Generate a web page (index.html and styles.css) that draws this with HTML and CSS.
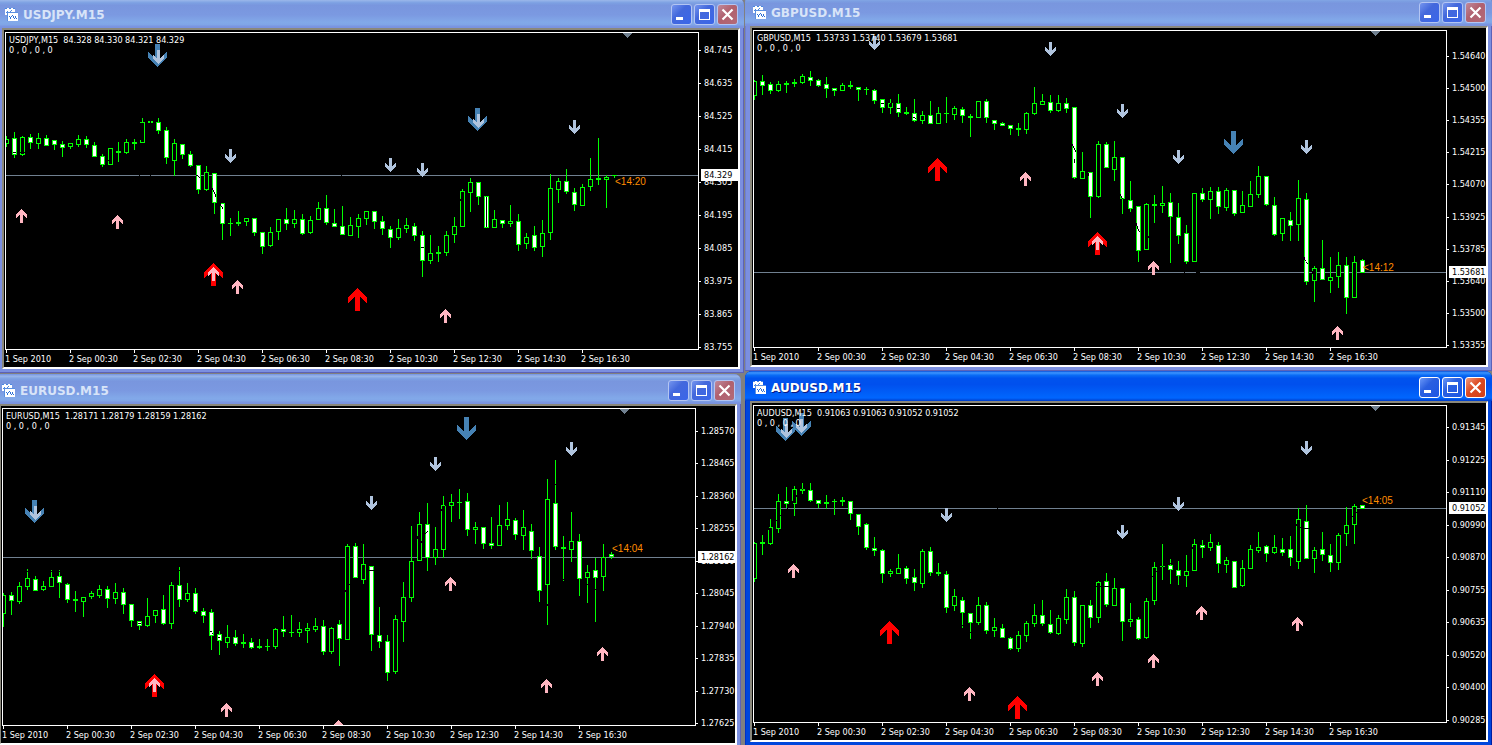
FILE: index.html
```html
<!DOCTYPE html>
<html lang="en">
<head>
    <meta charset="UTF-8">
    <meta name="viewport" content="width=device-width, initial-scale=1.0">
    <title>Charts M15</title>
    <link rel="stylesheet" href="styles.css">
</head>
<body>
    <!-- shared icons -->
    <svg class="sprite" aria-hidden="true">
        <symbol id="icon-chart" viewBox="0 0 13 13">
            <path fill="#fff" d="M0 0h10v7H0z"/>
            <path fill="#4a86e0" d="M0 0h2v1H0zM4 0h2v1H4zM8 0h2v1H8zM1 4h1v1H1zM2 3h1v1H2zM3 4h1v1H3zM5 3h1v1H5zM6 2h1v1H6z"/>
            <path fill="#5a8fe0" d="M2 4h11v9H2z"/>
            <path fill="#fff" d="M3 5h10v8H3z"/>
            <path fill="#2c6fd6" d="M4 8h1v1H4zM5 9h1v2H5zM6 8h1v1H6zM7 7h1v1H7zM8 8h1v2H8zM9 10h1v1H9zM10 8h1v2h-1zM11 10h1v1h-1z"/>
        </symbol>
        <symbol id="icon-min" viewBox="0 0 19 19">
            <path fill="#fff" d="M4 12h7v3H4z"/>
        </symbol>
        <symbol id="icon-max" viewBox="0 0 19 19">
            <path fill="#fff" fill-rule="evenodd" d="M4 4h11v11H4zM5 7v7h9V7z"/>
        </symbol>
        <symbol id="icon-close" viewBox="0 0 19 19">
            <path stroke="#fff" stroke-width="2.2" d="M4.5 4.5l10 10M14.5 4.5l-10 10"/>
        </symbol>
    </svg>

    <main class="desktop">
        <div class="column">
            <section class="window usdjpy">
                <header class="titlebar">
                    <svg class="app-icon"><use href="#icon-chart"/></svg>
                    <h2 class="title">USDJPY.M15</h2>
                    <button class="btn" aria-label="Minimize"><svg><use href="#icon-min"/></svg></button>
                    <button class="btn" aria-label="Maximize"><svg><use href="#icon-max"/></svg></button>
                    <button class="btn close" aria-label="Close"><svg><use href="#icon-close"/></svg></button>
                </header>
                <div class="client">
                    <div class="chart">
                        <div class="plot">
                            <svg class="candles" data-pair="usdjpy"></svg>
                            <p class="info">USDJPY,M15&nbsp; 84.328 84.330 84.321 84.329<br>0 , 0 , 0 , 0</p>
                        </div>
                        <div class="price-axis">
                            <ul class="prices">
                                <li>84.745</li><li>84.635</li><li>84.525</li><li>84.415</li><li>84.305</li>
                                <li>84.195</li><li>84.085</li><li>83.975</li><li>83.865</li><li>83.755</li>
                            </ul>
                            <span class="price-tag">84.329</span>
                        </div>
                    </div>
                    <ul class="time-axis">
                        <li>1 Sep 2010</li><li>2 Sep 00:30</li><li>2 Sep 02:30</li><li>2 Sep 04:30</li><li>2 Sep 06:30</li>
                        <li>2 Sep 08:30</li><li>2 Sep 10:30</li><li>2 Sep 12:30</li><li>2 Sep 14:30</li><li>2 Sep 16:30</li>
                    </ul>
                </div>
            </section>

            <section class="window eurusd">
                <header class="titlebar">
                    <svg class="app-icon"><use href="#icon-chart"/></svg>
                    <h2 class="title">EURUSD.M15</h2>
                    <button class="btn" aria-label="Minimize"><svg><use href="#icon-min"/></svg></button>
                    <button class="btn" aria-label="Maximize"><svg><use href="#icon-max"/></svg></button>
                    <button class="btn close" aria-label="Close"><svg><use href="#icon-close"/></svg></button>
                </header>
                <div class="client">
                    <div class="chart">
                        <div class="plot">
                            <svg class="candles" data-pair="eurusd"></svg>
                            <p class="info">EURUSD,M15&nbsp; 1.28171 1.28179 1.28159 1.28162<br>0 , 0 , 0 , 0</p>
                        </div>
                        <div class="price-axis">
                            <ul class="prices">
                                <li>1.28570</li><li>1.28465</li><li>1.28360</li><li>1.28255</li><li>1.28150</li>
                                <li>1.28045</li><li>1.27940</li><li>1.27835</li><li>1.27730</li><li>1.27625</li>
                            </ul>
                            <span class="price-tag">1.28162</span>
                        </div>
                    </div>
                    <ul class="time-axis">
                        <li>1 Sep 2010</li><li>2 Sep 00:30</li><li>2 Sep 02:30</li><li>2 Sep 04:30</li><li>2 Sep 06:30</li>
                        <li>2 Sep 08:30</li><li>2 Sep 10:30</li><li>2 Sep 12:30</li><li>2 Sep 14:30</li><li>2 Sep 16:30</li>
                    </ul>
                </div>
            </section>
        </div>

        <div class="column">
            <section class="window gbpusd">
                <header class="titlebar">
                    <svg class="app-icon"><use href="#icon-chart"/></svg>
                    <h2 class="title">GBPUSD.M15</h2>
                    <button class="btn" aria-label="Minimize"><svg><use href="#icon-min"/></svg></button>
                    <button class="btn" aria-label="Maximize"><svg><use href="#icon-max"/></svg></button>
                    <button class="btn close" aria-label="Close"><svg><use href="#icon-close"/></svg></button>
                </header>
                <div class="client">
                    <div class="chart">
                        <div class="plot">
                            <svg class="candles" data-pair="gbpusd"></svg>
                            <p class="info">GBPUSD,M15&nbsp; 1.53733 1.53740 1.53679 1.53681<br>0 , 0 , 0 , 0</p>
                        </div>
                        <div class="price-axis">
                            <ul class="prices">
                                <li>1.54640</li><li>1.54500</li><li>1.54355</li><li>1.54215</li><li>1.54070</li>
                                <li>1.53925</li><li>1.53785</li><li>1.53640</li><li>1.53500</li><li>1.53355</li>
                            </ul>
                            <span class="price-tag">1.53681</span>
                        </div>
                    </div>
                    <ul class="time-axis">
                        <li>1 Sep 2010</li><li>2 Sep 00:30</li><li>2 Sep 02:30</li><li>2 Sep 04:30</li><li>2 Sep 06:30</li>
                        <li>2 Sep 08:30</li><li>2 Sep 10:30</li><li>2 Sep 12:30</li><li>2 Sep 14:30</li><li>2 Sep 16:30</li>
                    </ul>
                </div>
            </section>

            <section class="window audusd active">
                <header class="titlebar">
                    <svg class="app-icon"><use href="#icon-chart"/></svg>
                    <h2 class="title">AUDUSD.M15</h2>
                    <button class="btn" aria-label="Minimize"><svg><use href="#icon-min"/></svg></button>
                    <button class="btn" aria-label="Maximize"><svg><use href="#icon-max"/></svg></button>
                    <button class="btn close" aria-label="Close"><svg><use href="#icon-close"/></svg></button>
                </header>
                <div class="client">
                    <div class="chart">
                        <div class="plot">
                            <svg class="candles" data-pair="audusd"></svg>
                            <p class="info">AUDUSD,M15&nbsp; 0.91063 0.91063 0.91052 0.91052<br>0 , 0 , 0 , 0</p>
                        </div>
                        <div class="price-axis">
                            <ul class="prices">
                                <li>0.91345</li><li>0.91225</li><li>0.91110</li><li>0.90990</li><li>0.90870</li>
                                <li>0.90755</li><li>0.90635</li><li>0.90520</li><li>0.90400</li><li>0.90285</li>
                            </ul>
                            <span class="price-tag">0.91052</span>
                        </div>
                    </div>
                    <ul class="time-axis">
                        <li>1 Sep 2010</li><li>2 Sep 00:30</li><li>2 Sep 02:30</li><li>2 Sep 04:30</li><li>2 Sep 06:30</li>
                        <li>2 Sep 08:30</li><li>2 Sep 10:30</li><li>2 Sep 12:30</li><li>2 Sep 14:30</li><li>2 Sep 16:30</li>
                    </ul>
                </div>
            </section>
        </div>
    </main>
    <script src="charts.js"></script>
</body>
</html>
```

FILE: styles.css
```css
* {
    margin: 0;
    padding: 0;
    box-sizing: border-box;
}

body {
    background: #808080;
    overflow: hidden;
    font-family: "DejaVu Sans Condensed", "DejaVu Sans", sans-serif;
}

.sprite {
    position: absolute;
    width: 0;
    height: 0;
}

.desktop {
    display: flex;
    height: 100vh;
    overflow: hidden;
}

.column {
    flex: 1;
    min-width: 0;
}

/* windows */
.window {
    padding: 0 4px 4px 5px;
    background: #7b8fe0;
    border-radius: 7px 7px 0 0;
    box-shadow: inset -1px -1px #5c62b8, inset 1px 0 #6f7fd0;
}

.usdjpy {
    margin: -2px 2px 0 -3px;
}

.eurusd {
    margin: 1px 5px 0 -6px;
}

.gbpusd {
    margin: -4px 0 0 -1px;
}

.audusd {
    margin: 0 0 0 -1px;
}

.titlebar {
    display: flex;
    align-items: center;
    gap: 2px;
    height: 30px;
    margin: 0 -4px 0 -5px;
    padding: 3px 6px 0 8px;
    border-radius: 7px 7px 0 0;
    background: linear-gradient(180deg, #7697e7, #7e9ee3 3%, #94afe8 6%, #97b4e9 8%, #82a5e4 14%, #7c9fe2 17%, #7996de 25%, #7b99e1 56%, #82a9e9 81%, #80a5e7 89%, #7b96e1 94%, #7a93df 97%, #7a93df);
}

.app-icon {
    width: 13px;
    height: 13px;
    shape-rendering: crispEdges;
}

.title {
    flex: 1;
    padding-left: 3px;
    font: bold 12px/16px "DejaVu Sans", sans-serif;
    color: #d8e4f8;
}

.btn {
    width: 21px;
    height: 21px;
    border: 1px solid #b3c5f3;
    border-radius: 3px;
    background: linear-gradient(135deg, #7595ee, #4368dc 40%, #3a66ea);
}

.btn svg {
    display: block;
    width: 19px;
    height: 19px;
}

.btn.close {
    background: linear-gradient(135deg, #c08a9c, #b0606e 45%, #b36a78);
}

.active {
    background: #0046dc;
    box-shadow: inset -1px -1px #001ea0, inset 1px 0 #0030c8;
}

.active .titlebar {
    background: linear-gradient(180deg, #0a50d8, #3d95ff 6%, #0a6cf5 14%, #0053ee 24%, #0050ee 45%, #0062fa 80%, #0066ff 90%, #0048d8 97%, #003dc8);
}

.active .title {
    color: #fff;
    text-shadow: 1px 1px #0a1883;
}

.active .btn {
    border-color: #fff;
    background: linear-gradient(135deg, #6b98f8, #2a5fe0 40%, #1c56e4);
}

.active .btn.close {
    background: linear-gradient(135deg, #f09a80, #dc4a22 45%, #d0401a);
}

/* chart area */
.client {
    padding: 2px 0 0 1px;
    background: #000;
    border: 2px solid;
    border-color: #8a887c #fff #fff #8a887c;
    color: #fff;
    font-size: 9px;
    line-height: 10px;
    white-space: nowrap;
    overflow: hidden;
}

.chart {
    display: flex;
    height: 318px;
}

.plot {
    position: relative;
    flex: 1;
    min-width: 0;
    border: 1px solid #fff;
}

.candles {
    display: block;
    width: 100%;
    height: 100%;
    shape-rendering: crispEdges;
}

.candles text {
    font: 10px "Liberation Sans", Arial, sans-serif;
    fill: #ff8c00;
}

.info {
    position: absolute;
    top: 2px;
    left: 3px;
}

.price-axis {
    position: relative;
    width: 39px;
}

.prices {
    display: flex;
    flex-direction: column;
    justify-content: space-between;
    height: 320px;
    list-style: none;
}

.prices li {
    position: relative;
    padding-left: 5px;
}

.prices li::before {
    content: "";
    position: absolute;
    left: 0;
    top: 5px;
    width: 2px;
    height: 1px;
    background: #fff;
}

.usdjpy .prices {
    padding-top: 13px;
}

.gbpusd .prices {
    padding-top: 21px;
}

.eurusd .prices {
    padding-top: 18px;
}

.audusd .prices {
    padding-top: 17px;
}

.price-tag {
    position: absolute;
    left: 2px;
    right: 0;
    padding-left: 3px;
    background: #fff;
    color: #000;
    line-height: 12px;
    transform: translateY(-50%);
}

.time-axis {
    display: flex;
    height: 17px;
    padding-top: 4px;
    list-style: none;
}

.time-axis li {
    position: relative;
    flex: 0 0 64px;
}

.time-axis li::before {
    content: "";
    position: absolute;
    left: 1px;
    top: -4px;
    width: 1px;
    height: 3px;
    background: #fff;
}
```

FILE: charts.js
```js
// candle: [high, body top, body bottom, low, type], 1 = down (white body), 0 = up (hollow)
// arrows: [kind, x, y], gaps: [x, y, width, height]
const STEP = 8;

const charts = {
    usdjpy: {
        price: 142,
        timer: ['<14:20', 609, 152],
        candles: [
            [103,106,111,114,0],[99,105,122,125,1],[103,104,122,123,0],[101,104,110,116,1],[100,105,111,116,0],
            [102,105,113,113,1],[107,107,112,117,1],[108,111,115,124,1],[110,110,114,116,0],[102,106,112,114,0],
            [103,106,112,115,1],[109,112,124,124,1],[121,123,132,134,1],[115,115,132,132,0],[109,118,120,129,0],
            [106,109,120,121,0],[106,109,111,117,0],[85,89,110,110,0],[88,88,90,90,0],[85,89,98,101,1],
            [94,97,125,131,1],[106,110,128,143,0],[111,111,122,126,1],[118,121,133,134,1],[132,132,157,161,1],
            [133,139,157,158,0],[140,140,170,181,1],[170,170,191,207,1],[185,190,191,203,0],[178,189,191,193,0],
            [185,185,189,193,0],[185,185,200,203,1],[199,199,214,221,1],[194,199,213,214,0],[186,186,199,207,0],
            [175,186,191,197,1],[177,186,191,195,0],[181,186,201,202,1],[183,187,200,201,0],[169,175,187,187,0],
            [162,175,190,192,1],[176,190,194,194,1],[173,193,202,202,1],[184,192,203,203,0],[181,185,194,205,0],
            [178,178,186,192,0],[178,178,189,196,1],[183,188,196,202,1],[193,196,205,215,1],[186,195,205,207,0],
            [185,192,196,200,0],[190,193,203,208,1],[198,202,228,244,1],[202,220,228,231,0],[213,219,221,229,0],
            [198,202,220,223,0],[184,193,202,210,0],[156,158,194,194,0],[145,149,160,179,0],[149,149,164,172,1],
            [163,163,195,195,1],[177,186,195,195,0],[187,187,191,195,1],[172,188,191,194,0],[181,188,212,218,1],
            [200,204,211,216,0],[193,202,215,218,1],[187,200,214,224,0],[141,155,200,207,0],[145,148,157,170,0],
            [136,148,159,161,1],[155,159,172,178,1],[151,154,173,173,0],[125,146,154,158,0],[105,145,147,152,0],
            [142,144,147,175,0],[142,142,143,145,0]
        ],
        gaps: [
            [7,119,3,1],[14,119,5,1],[134,90,1,17],[144,88,1,2],[101,127,3,1],[190,142,2,1],[192,143,1,1],[193,144,1,1],
            [206,155,1,2],[207,157,1,2],[208,159,1,2],[209,161,1,3],[214,170,1,3],[215,173,1,1],[216,174,1,2],
            [133,142,1,1],[144,142,1,1],[335,142,1,1],[415,214,3,1],[454,166,1,2],[477,154,3,1],[480,164,1,30]
        ],
        arrows: [
            ['up', 10, 176], ['up', 106, 182], ['up', 226, 247], ['UP', 198, 230], ['up', 202, 234],
            ['UP', 342, 255], ['up', 434, 276], ['down', 219, 116], ['down', 379, 125], ['down', 411, 130],
            ['down', 563, 87], ['DOWN', 462, 75], ['down', 467, 81], ['DOWN', 142, 11], ['down', 147, 17]
        ]
    },
    gbpusd: {
        price: 241,
        timer: ['<14:12', 609, 240],
        candles: [
            [49,50,65,69,0],[44,50,55,64,1],[51,53,60,63,1],[50,53,60,61,0],[50,52,54,62,0],
            [48,51,53,56,0],[43,45,52,53,0],[40,46,50,55,1],[48,49,55,56,1],[46,53,58,67,1],
            [57,57,60,65,1],[52,54,60,60,0],[50,54,56,58,0],[56,56,59,70,1],[56,58,59,64,0],
            [58,59,70,73,1],[68,68,77,82,1],[68,72,77,83,0],[63,72,82,86,1],[76,81,83,84,0],
            [68,82,90,91,1],[80,84,90,93,0],[70,84,93,93,1],[76,82,93,93,0],[66,82,83,92,0],
            [75,77,84,89,0],[76,78,85,92,1],[83,85,87,106,0],[70,70,87,87,0],[68,70,87,92,1],
            [89,89,93,99,1],[91,92,95,95,1],[94,94,98,104,1],[92,97,99,105,0],[81,82,99,103,0],
            [56,72,83,84,0],[63,70,74,74,0],[64,71,80,82,1],[64,72,80,81,0],[67,72,78,82,1],
            [76,76,147,148,1],[121,140,148,148,0],[141,141,166,187,1],[110,113,166,167,0],[111,113,137,137,1],
            [110,126,139,150,0],[126,126,168,183,1],[150,169,178,181,1],[175,175,220,231,1],[172,173,219,219,0],
            [164,173,175,192,0],[155,172,175,182,0],[162,171,186,232,1],[172,186,205,213,1],[194,202,231,233,1],
            [162,162,231,231,0],[157,162,169,171,1],[156,160,169,188,0],[156,160,176,183,1],[157,159,177,180,0],
            [159,159,183,185,1],[160,174,182,182,0],[150,163,176,176,0],[135,145,164,167,0],[145,145,174,175,1],
            [166,174,204,205,1],[187,187,203,210,0],[181,189,195,210,1],[149,167,194,210,0],[162,168,251,254,1],
            [235,237,250,271,0],[209,237,249,249,1],[226,246,250,262,0],[221,234,246,257,0],[226,234,267,283,1],
            [225,231,267,267,0],[228,229,242,242,1]
        ],
        gaps: [
            [127,72,3,1],[136,72,2,1],[143,77,3,1],[159,86,2,1],[161,87,1,1],[318,113,1,2],[319,115,1,2],[320,117,1,2],
            [321,119,1,2],[320,128,1,4],[334,142,1,3],[366,163,1,2],[367,165,1,2],[368,167,1,1],[382,192,1,3],
            [383,195,1,3],[384,198,1,2],[385,200,1,1],[394,205,1,2],[430,241,1,1],[442,241,4,1],
            [550,226,1,3],[551,229,1,1],[552,231,1,1],[553,232,1,1],[558,240,1,3]
        ],
        arrows: [
            ['down', 115, 5], ['down', 291, 11], ['down', 363, 73], ['down', 419, 119], ['DOWN', 470, 100],
            ['down', 547, 109], ['UP', 174, 127], ['up', 266, 141], ['UP', 334, 201], ['up', 338, 205],
            ['up', 394, 230], ['up', 578, 295]
        ]
    },
    eurusd: {
        price: 148,
        timer: ['<14:04', 609, 143],
        candles: [
            [184,186,205,218,0],[183,186,192,206,1],[173,177,193,195,0],[160,169,178,181,0],[167,170,182,182,1],
            [172,177,181,182,0],[161,168,178,178,0],[161,167,174,189,1],[174,175,191,194,1],[182,190,192,203,0],
            [188,188,193,208,0],[182,184,188,190,0],[176,180,187,189,0],[177,180,190,199,1],[174,183,190,195,0],
            [179,183,196,205,1],[195,195,212,218,1],[212,212,217,221,1],[189,207,217,218,0],[201,201,207,214,0],
            [186,200,215,216,1],[173,176,215,220,0],[158,176,191,198,1],[174,184,191,193,0],[179,184,203,205,1],
            [199,202,207,214,1],[200,203,227,241,1],[222,225,232,246,1],[216,228,234,239,0],[221,228,235,237,1],
            [225,233,235,239,0],[229,233,239,240,1],[230,237,239,240,0],[230,237,238,242,0],[219,220,238,240,0],
            [207,220,223,228,1],[206,223,224,228,0],[213,220,224,228,0],[214,219,222,234,0],[209,217,221,223,0],
            [211,217,243,246,1],[218,219,243,245,0],[211,215,230,257,1],[135,137,231,231,0],[134,137,169,169,1],
            [135,155,171,175,0],[157,157,226,242,1],[198,226,233,239,1],[226,232,264,272,1],[206,210,263,265,0],
            [173,188,213,233,0],[117,152,189,193,0],[103,115,152,152,0],[94,115,149,162,1],[118,140,149,156,0],
            [87,96,141,149,0],[85,93,97,113,0],[80,93,94,110,0],[84,92,121,127,1],[113,118,121,135,0],
            [118,118,135,140,1],[108,134,137,140,1],[96,116,137,137,0],[93,110,117,121,0],[109,111,126,131,1],
            [101,118,127,141,0],[115,122,142,150,1],[138,147,182,193,1],[70,90,176,216,0],[51,94,138,141,1],
            [127,138,140,172,0],[103,132,141,153,0],[125,132,170,187,1],[156,163,169,194,0],[149,161,169,213,1],
            [135,148,168,182,0],[143,145,148,150,1]
        ],
        gaps: [
            [24,162,1,1],[48,162,1,1],[56,162,1,1],[135,214,3,1],[176,161,1,1],[207,222,2,1],[209,224,1,1],[215,228,2,1],
            [342,181,1,2],[346,175,1,1],[344,251,1,1],[366,161,5,1],[414,127,1,3],[418,132,1,2],[422,124,1,1],
            [423,123,1,1],[424,122,1,1],[438,100,1,2],[442,96,1,1],[544,195,1,2],[552,75,1,1],[560,170,1,1],
            [584,175,1,1],[592,180,1,1]
        ],
        arrows: [
            ['DOWN', 22, 91], ['down', 27, 97], ['UP', 142, 265], ['up', 146, 269], ['up', 218, 294],
            ['DOWN', 454, 8], ['down', 427, 48], ['down', 363, 87], ['down', 563, 33], ['up', 442, 168],
            ['up', 594, 238], ['up', 538, 270], ['up', 330, 311]
        ]
    },
    audusd: {
        price: 102,
        timer: ['<14:05', 608, 98],
        candles: [
            [136,137,173,176,0],[129,136,138,149,0],[113,121,138,139,0],[88,95,123,127,0],[81,95,98,102,1],
            [80,83,98,110,0],[77,83,85,88,0],[77,84,95,96,1],[94,94,98,102,1],[89,96,98,103,0],
            [93,95,96,109,0],[91,94,96,100,0],[95,95,108,114,1],[108,108,121,129,1],[117,118,142,144,1],
            [131,142,145,150,1],[143,144,168,177,1],[163,165,168,171,0],[148,162,168,168,0],[160,162,173,178,1],
            [163,171,177,185,1],[143,145,178,182,0],[141,145,167,170,1],[157,166,168,170,0],[165,168,202,207,1],
            [183,190,200,205,0],[191,194,207,222,1],[207,207,217,233,1],[191,199,217,219,0],[196,199,225,228,1],
            [212,221,225,231,0],[218,222,232,232,1],[231,232,243,244,1],[225,229,243,246,0],[215,217,230,236,0],
            [198,209,218,221,0],[194,209,218,220,1],[204,218,227,228,1],[209,212,228,229,0],[183,191,214,218,0],
            [185,191,237,240,1],[199,199,238,241,0],[194,199,212,222,1],[175,176,212,217,0],[167,175,199,201,1],
            [172,182,200,200,0],[182,182,216,235,1],[197,213,216,221,0],[211,213,233,234,1],[192,195,232,233,0],
            [156,161,195,199,0],[138,160,161,174,0],[153,159,164,178,1],[155,164,170,179,1],[149,165,170,181,0],
            [133,138,165,165,0],[134,139,142,152,1],[128,136,142,145,0],[136,139,158,167,1],[151,154,159,167,0],
            [155,155,182,182,1],[154,162,180,181,0],[139,143,163,163,0],[126,141,145,147,0],[139,140,148,156,1],
            [129,141,147,148,0],[132,143,147,150,1],[130,143,152,160,1],[102,113,156,163,0],[99,115,153,153,1],
            [141,144,153,167,0],[126,143,149,155,1],[138,149,157,166,1],[127,129,157,164,0],[101,119,128,140,0],
            [98,100,119,138,0],[99,99,103,103,1]
        ],
        gaps: [
            [14,121,1,3],[22,114,1,1],[26,109,1,1],[33,102,1,1],[38,95,1,3],[42,89,1,2],[48,83,1,1],[208,219,1,1],
            [216,226,1,1],[243,102,1,1],[342,180,13,1],[398,170,1,1],[402,165,1,1],[408,160,1,1],[416,157,1,1],
            [438,141,1,2],[542,118,1,2],[546,121,1,1],[550,122,5,1],[598,110,1,1],[602,106,1,1]
        ],
        arrows: [
            ['DOWN', 22, 12], ['down', 27, 18], ['DOWN', 38, 7], ['down', 42, 13], ['down', 187, 102],
            ['down', 363, 119], ['down', 419, 91], ['down', 547, 35], ['up', 34, 158], ['UP', 126, 215],
            ['UP', 254, 290], ['up', 210, 281], ['up', 338, 266], ['up', 394, 248], ['up', 442, 200], ['up', 538, 211]
        ]
    }
};

const arrowKinds = {
    up: { color: '#ffb6c1', size: 'small' },
    down: { color: '#b0c4de', size: 'small' },
    UP: { color: '#ff0000', size: 'large' },
    DOWN: { color: '#4682b4', size: 'large' }
};

const arrowShapes = {
    small: { h: 14, d: 'M5 0h1v1h1v1h1v1h1v1h1v1h1v4h-1v-1h-1v-1h-1v-1h-1v8H4V6H3v1H2v1H1v1H0V5h1V4h1V3h1V2h1V1h1z' },
    large: { h: 23, d: 'M9 0h1v1h1v1h1v1h1v1h1v1h1v1h1v1h1v1h1v1h1v6h-1v-1h-1v-1h-1v-1h-1v-1h-1v-1h-1v-1h-1v14H7V9H6v1H5v1H4v1H3v1H2v1H1v1H0V9h1V8h1V7h1V6h1V5h1V4h1V3h1V2h1V1h1z' }
};

function rect(x, y, w, h, fill) {
    return `<rect x="${x}" y="${y}" width="${w}" height="${h}" fill="${fill}"/>`;
}

function drawCandle([high, top, bottom, low, down], i) {
    const x = i * STEP;
    let out = rect(x, high, 1, low - high, '#0f0') + rect(x - 2, top, 5, bottom - top, '#0f0');
    if (bottom - top > 2) {
        out += rect(x - 1, top + 1, 3, bottom - top - 2, down ? '#fff' : '#000');
    }
    return out;
}

function drawArrow([kind, x, y]) {
    const { color, size } = arrowKinds[kind];
    const { h, d } = arrowShapes[size];
    const flip = kind.toLowerCase() === 'down' ? ` translate(0 ${h}) scale(1 -1)` : '';
    return `<path fill="${color}" transform="translate(${x} ${y})${flip}" d="${d}"/>`;
}

document.querySelectorAll('.candles').forEach(svg => {
    const chart = charts[svg.dataset.pair];
    const [label, tx, ty] = chart.timer;

    svg.innerHTML =
        rect(0, chart.price, '100%', 1, '#708090') +
        chart.candles.map(drawCandle).join('') +
        chart.gaps.map(g => rect(...g, '#000')).join('') +
        chart.arrows.map(drawArrow).join('') +
        '<path fill="#708090" d="M617 0h9v1h-1v1h-1v1h-1v1h-1v1h-1v-1h-1v-1h-1v-1h-1v-1h-1z"/>' +
        `<text x="${tx}" y="${ty}">${label.replace('<', '&lt;')}</text>`;

    svg.closest('.chart').querySelector('.price-tag').style.top = chart.price + 1 + 'px';
});
```
